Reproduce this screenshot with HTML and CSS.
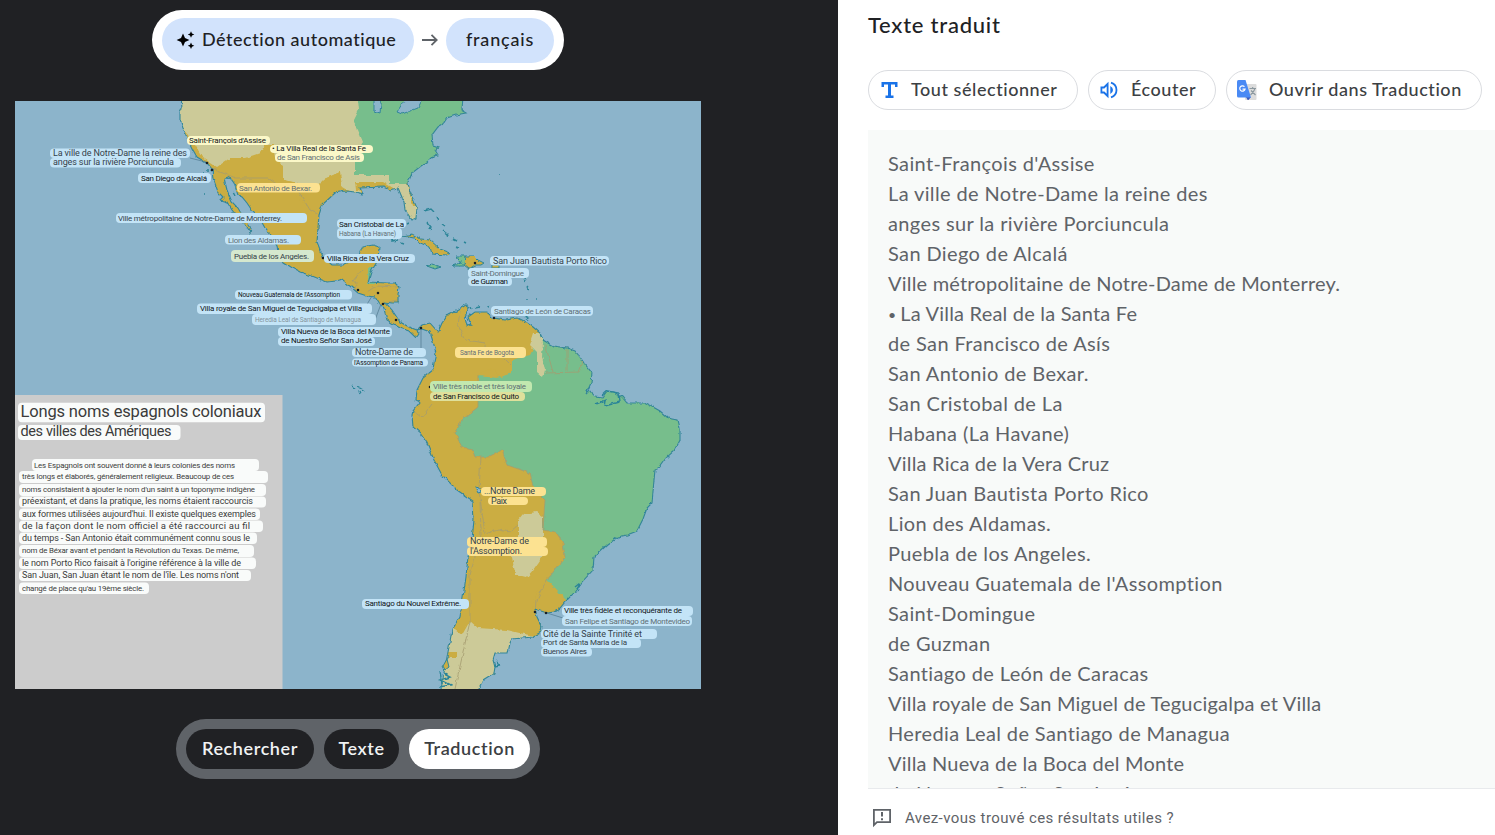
FILE: index.html
```html
<!DOCTYPE html>
<html lang="fr">
<head>
<meta charset="utf-8" />
<title>Texte traduit</title>
<link rel="stylesheet" href="styles.css">
</head>

<body>
<!-- Image et sélection des langues -->
<main class="viewer">
    <div class="lang_bar">
        <div class="lang lang_from">
            <svg width="20" height="20" viewBox="0 0 20 20"><path d="M7 3.500 9 8 13.400 10 9 12 7 16.500 5 12 0.600 10 5 8zM15 1.200 16 3.500 18.300 4.500 16 5.500 15 7.800 14 5.500 11.800 4.500 14 3.500zM15 12.500 16 14.700 18.300 15.700 16 16.700 15 19 14 16.700 11.800 15.700 14 14.700z"/></svg>
            <span class="txt_from">Détection automatique</span>
        </div>
        <svg class="arrow" width="16" height="14" viewBox="0 0 16 14"><path d="M0 7H14.500M9.500 1.800 14.700 7 9.500 12.200"/></svg>
        <div class="lang lang_to"><span>français</span></div>
    </div>

    <svg class="map" width="686" height="588" viewBox="15 101 686 588">
        <defs>
            <path id="land" d="M181 96 L182 108 180 112 180 120 183 128 188 140 193 150 197 157 207 163 212 169 213 178 218 192 223 197 220 200 227 202 232 210 240 220 246 226 250 233 251 228 242 215 238 208 232 202 227 190 224 178 227 177 231 179 234 183 238 195 242 197 247 203 253 212 260 219 265 228 272 238 277 245 278 253 283 262 291 267 300 272 312 276 327 282 335 281 342 279 351 287 358 293 367 296 375 297 380 305 384 309 387 320 400 328 409 331 415 337 418 333 417 330 422 329 430 332 434 345 436 353 434 362 433 370 423 378 417 390 416 400 420 402 413 411 412 415 413 427 420 433 427 443 434 460 442 475 457 490 473 501 474 520 472 540 468 557 466 577 463 597 460 617 452 630 449 647 445 667 440 695 L477 692 483 680 494 673 495 667 493 660 495 653 508 653 510 643 512 639 533 637 541 632 542 627 537 617 535 609 547 613 554 612 560 608 565 602 573 594 582 582 593 570 594 557 607 545 618 537 627 535 637 531 643 519 647 508 652 503 654 480 655 470 659 468 667 457 675 450 680 440 680 428 678 420 668 418 660 411 653 407 645 403 638 403 627 403 622 397 614 392 607 391 602 398 595 397 590 390 586 394 591 383 592 373 584 363 580 357 575 351 567 348 553 346 543 340 540 333 533 327 527 323 517 318 505 320 493 318 487 312 475 312 468 317 471 325 467 326 465 318 469 307 466 305 458 310 448 315 442 323 438 332 430 323 422 325 417 330 409 327 400 322 392 310 385 302 392 303 398 303 398 294 399 287 395 283 387 283 368 282 371 272 378 260 379 247 373 245 362 247 358 258 343 265 332 265 323 257 317 242 319 215 322 205 335 193 345 191 355 192 363 194 360 188 383 187 390 190 398 188 404 202 405 210 412 220 416 218 417 208 410 192 408 183 412 173 421 166 430 160 434 156 438 155 435 150 439 147 433 145 432 135 438 127 443 124 447 118 456 115 467 113 462 110 463 96z"/>
            <clipPath id="on_land"><use href="#land"/></clipPath>
            <!-- côtes irrégulières -->
            <filter id="rough" x="0" y="0" width="1" height="1">
                <feTurbulence type="fractalNoise" baseFrequency="0.18" numOctaves="2" seed="4"/>
                <feDisplacementMap in="SourceGraphic" scale="4" xChannelSelector="R" yChannelSelector="G"/>
            </filter>
        </defs>

        <rect class="sea" x="15" y="101" width="686" height="588"/>
        <g filter="url(#rough)">
            <rect x="5" y="91" width="706" height="608" fill="#8cb4cb"/>
            <use class="gold" href="#land"/>
            <g clip-path="url(#on_land)">
                <path class="tan" d="M170 90H480V230H400V196L382 183H355L340 172 322 180 318 190 308 185 283 180V165L275 158 273 145H265L260 153 245 158 230 158 217 167 203 158 195 145 183 128 170 120z"/>
                <path class="tan" d="M340 172H355L362 200H340z"/>
                <path class="gold" d="M283 180 308 185 318 190 322 180 340 172 342 187 352 193 320 215 300 200z"/>
                <path class="green" d="M357 90 359 110 353 122 358 130 363 142 355 155V175H389V184H408L480 190V90z"/>
                <path class="gold" d="M355 182H383L400 192 388 194 356 190zM407 183 414 188 419 206 413 206z"/>
                <path class="green" d="M368 267H374V284H368z"/>
                <path class="green" d="M543 330 530 355 512 360 512 373 497 378 490 373 478 375V407L462 420 455 433 462 447 473 450 475 457 488 457 502 450 507 465 530 473 533 487 545 500 543 530 556 532 563 543 565 557 547 580 557 590 565 601 590 600 700 500V330z"/>
                <path class="gold" d="M547 580 538 590 530 615 556 618 568 602 564 598 557 590zM478 376 498 378 495 369 480 372z"/>
                <path class="tan" d="M533 333 540 333 543 343 542 357 545 370 543 377 537 372 537 353 529 345z"/>
                <path class="tan" d="M523 514 537 512 543 516 543 545 542 557 538 563 533 570 527 577 515 574 512 557 518 545 518 520z"/>
                <path class="tan" d="M430 695 452 628 462 635 470 621 478 628 507 630 528 635 545 637 540 695z"/>
                <path class="gold" d="M447 652H457V657H447z"/>
                <path class="border" d="M212 169 236 178H268L285 190 295 186 310 210 319 215M355 293 356 282H352L362 270M367 292 376 286 398 287M385 303 397 300M460 311 458 325 465 340 485 343 488 350 498 352 511 365M478 375 478 407 462 420 455 433 462 447 473 450 475 457 488 457 502 450 507 465 530 473 533 487 545 500 543 530 556 532 563 543 565 557 547 580M545 344 553 372M567 349V371M583 362 579 372 545 373M413 410 422 417 432 404M481 457 479 490 485 534 498 530 510 532 518 525M480 500 481 535 470 575 470 621M470 621 455 689M547 580 537 600 536 612"/>
            </g>
            <use class="coast" href="#land"/>
            <path class="lake" d="M374 96V111L380 113 382 96zM407 96 397 112 402 114 418 108 424 96z"/>
            <path class="lake" d="M475 487 480 488 481 492 478 493z"/>
            <!-- îles -->
            <path class="isle gold" d="M403 236 412 234 421 239 430 240 440 249 451 253 447 255 432 254 430 247 418 242 414 238z"/>
            <path class="isle gold" d="M465 256 474 256 478 260 484 263 481 265 475 265 469 269 464 265zM492 265H499V268H492z"/>
            <path class="isle green" d="M456 256 465 256 464 266 452 266 461 263zM427 266 433 264 441 267 435 269z"/>
            <path class="isle gold" d="M447 659 449 667 445 670 443 666z"/>
            <path class="isle" d="M424 211 431 209 434 212M427 222 431 227 430 230M436 217 438 220M442 224 445 226M443 230 448 234 449 237M453 239 457 241M464 242 466 243M458 248 455 247M391 241 398 240M401 243 404 244M407 224 409 223M525 278 526 281M527 287 529 290M527 299 527 301M536 299V300M471 307 472 309M475 308 480 307M486 306 489 307M525 316 529 318 526 320M352 386 355 389M358 387 365 391M359 391 360 394M444 674 450 677 441 680 451 685 439 687M440 671 442 684M496 661 500 665 494 666M601 396 607 391 619 393 620 402 605 406 606 400 596 404M575 587 580 583 577 590M499 174H500M202 173H204M207 171H209M204 194H205M224 201H225M233 192 235 196"/>
        </g>

        <!-- villes -->
        <path class="leader" d="M190 158 206 162M372 296 366 306M381 304 375 320M421 329V348M547 613 563 618"/>
        <path class="town" d="M207 163h0M212 170h0M358 290h0M378 293h0M383 304h0M396 320h0M421 328h0M323 258h0M475 263h0M494 318h0M430 387h0M535 612h0M546 613h0"/>

        <!-- étiquettes traduites -->
        <g class="tags blue">
            <rect x="50" y="148.500" width="140" height="9.500" rx="4"/><text class="big" x="53" y="156.300" textLength="134">La ville de Notre-Dame la reine des</text>
            <rect x="50" y="158" width="131" height="9.500" rx="4"/><text class="big" x="53" y="165.300" textLength="121">anges sur la rivière Porciuncula</text>
            <rect x="138" y="173" width="73" height="10" rx="4"/><text class="dark" x="141" y="180.500" textLength="66">San Diego de Alcalá</text>
            <rect x="116" y="213" width="191" height="10" rx="4"/><text x="118" y="221" textLength="164">Ville métropolitaine de Notre-Dame de Monterrey.</text>
            <rect x="337" y="219" width="69" height="9" rx="4"/><text class="dark" x="339" y="226.500" textLength="65">San Cristobal de La</text>
            <rect x="337" y="228" width="65" height="11" rx="4"/><text class="tiny pale" x="339" y="235.500" textLength="57">Habana (La Havane)</text>
            <rect x="324" y="254" width="91" height="9" rx="4"/><text class="dark" x="327" y="261" textLength="82">Villa Rica de la Vera Cruz</text>
            <rect x="490" y="256" width="119" height="9.500" rx="4"/><text class="big" x="493" y="263.500" textLength="114">San Juan Bautista Porto Rico</text>
            <rect x="225" y="235" width="76" height="9.500" rx="4"/><text class="pale" x="228" y="242.700" textLength="61">Lion des Aldamas.</text>
            <rect x="235" y="290" width="117" height="9.500" rx="4"/><text class="tiny dark" x="238" y="296.500" textLength="102">Nouveau Guatemala de l'Assomption</text>
            <rect x="468" y="268" width="61" height="10" rx="4"/><text class="pale" x="471" y="275.500" textLength="53">Saint-Domingue</text>
            <rect x="468" y="277" width="44" height="9" rx="4"/><text class="dark" x="471" y="283.500" textLength="37">de Guzman</text>
            <rect x="491" y="306" width="102" height="10" rx="4"/><text class="pale" x="494" y="313.500" textLength="97">Santiago de León de Caracas</text>
            <rect x="197" y="303.500" width="175" height="10.500" rx="4"/><text class="dark" x="200" y="311.300" textLength="162">Villa royale de San Miguel de Tegucigalpa et Villa</text>
            <rect x="252" y="314" width="124" height="11" rx="4"/><text class="tiny faint" x="255" y="321.500" textLength="106">Heredia Leal de Santiago de Managua</text>
            <rect x="278" y="327" width="114" height="10" rx="4"/><text class="dark" x="281" y="334" textLength="109">Villa Nueva de la Boca del Monte</text>
            <rect x="278" y="337" width="97" height="9" rx="4"/><text class="dark" x="281" y="343.300" textLength="91">de Nuestro Señor San José</text>
            <rect x="352" y="348" width="74" height="9" rx="4"/><text class="big" x="355" y="355.300" textLength="58">Notre-Dame de</text>
            <rect x="352" y="358.500" width="76" height="8" rx="4"/><text class="tiny dark" x="354" y="364.500" textLength="69">l'Assomption de Panama</text>
            <rect x="362" y="599" width="107" height="10" rx="4"/><text class="dark" x="365" y="606.300" textLength="96">Santiago du Nouvel Extrême.</text>
            <rect x="562" y="606" width="131" height="10" rx="4"/><text class="dark" x="564" y="613.300" textLength="118">Ville très fidèle et reconquérante de</text>
            <rect x="562" y="616" width="130" height="10" rx="4"/><text class="pale" x="565" y="623.500" textLength="125">San Felipe et Santiago de Montevideo</text>
            <rect x="541" y="629" width="116" height="10" rx="4"/><text class="big" x="543" y="637" textLength="99">Cité de la Sainte Trinité et</text>
            <rect x="541" y="638.500" width="100" height="9.500" rx="4"/><text x="543" y="645.300" textLength="84">Port de Santa Maria de la</text>
            <rect x="541" y="647.500" width="51" height="9" rx="4"/><text x="543" y="654.300" textLength="44">Buenos Aires</text>
        </g>
        <g class="tags cream">
            <rect x="187" y="136" width="83" height="9" rx="4"/><text class="dark" x="189" y="143.300" textLength="77">Saint-François d'Assise</text>
            <rect x="270" y="145" width="103" height="8" rx="4"/><text class="dark" x="272" y="151.300" textLength="94">• La Villa Real de la Santa Fe</text>
            <rect x="275" y="153" width="89" height="9" rx="4"/><text class="pale" x="277" y="160.300" textLength="83">de San Francisco de Asís</text>
        </g>
        <g class="tags yellow">
            <rect x="237" y="183" width="83" height="9.500" rx="4"/><text class="pale" x="239" y="190.500" textLength="73">San Antonio de Bexar.</text>
            <rect x="455" y="347" width="71" height="11" rx="4"/><text class="tiny pale" x="460" y="354.500" textLength="54">Santa Fe de Bogota</text>
            <rect x="481" y="487" width="65" height="9" rx="4"/><text class="big" x="484" y="494.300" textLength="51">...Notre Dame</text>
            <rect x="488" y="497" width="40" height="8" rx="4"/><text class="big" x="491" y="504" textLength="16">Paix</text>
            <rect x="467" y="537" width="80" height="10" rx="4"/><text class="big" x="470" y="544.300" textLength="59">Notre-Dame de</text>
            <rect x="467" y="547" width="81" height="9" rx="4"/><text class="big" x="470" y="554" textLength="52">l'Assomption.</text>
        </g>
        <g class="tags lime">
            <rect class="soft" x="231" y="250" width="83" height="12" rx="4"/><text x="234" y="258.500" textLength="75">Puebla de los Angeles.</text>
            <rect x="430" y="381" width="102" height="11" rx="4"/><text class="pale" x="433" y="389.300" textLength="93">Ville très noble et très loyale</text>
            <rect class="olive" x="430" y="392" width="95" height="9" rx="4"/><text class="dark" x="433" y="399.300" textLength="86">de San Francisco de Quito</text>
        </g>

        <!-- légende -->
        <rect class="legend" x="15" y="395" width="267.500" height="294"/>
        <g class="tags paper">
            <rect x="18" y="402.700" width="247" height="19.500" rx="4"/><text class="h1" x="20.500" y="417.300" textLength="241">Longs noms espagnols coloniaux</text>
            <rect x="18" y="425" width="162.500" height="15" rx="4"/><text class="h2" x="20.500" y="436.300" textLength="151">des villes des Amériques</text>
            <rect x="32" y="459" width="227" height="12" rx="4"/><text class="small" x="34" y="468" textLength="201">Les Espagnols ont souvent donné à leurs colonies des noms</text>
            <rect x="19" y="471" width="249" height="12" rx="4"/><text class="small" x="22" y="479.300" textLength="212">très longs et élaborés, généralement religieux. Beaucoup de ces</text>
            <rect x="19" y="484" width="247" height="12" rx="4"/><text class="small" x="22" y="492.300" textLength="233">noms consistaient à ajouter le nom d'un saint à un toponyme indigène</text>
            <rect x="19" y="496.500" width="247" height="11" rx="4"/><text x="22" y="504" textLength="231">préexistant, et dans la pratique, les noms étaient raccourcis</text>
            <rect x="19" y="508.500" width="241" height="11.500" rx="4"/><text x="22" y="517" textLength="234">aux formes utilisées aujourd'hui. Il existe quelques exemples</text>
            <rect x="19" y="520.500" width="244" height="11.500" rx="4"/><text class="wide" x="22" y="529" textLength="228">de la façon dont le nom officiel a été raccourci au fil</text>
            <rect x="19" y="532.500" width="238" height="11.500" rx="4"/><text x="22" y="541" textLength="228">du temps - San Antonio était communément connu sous le</text>
            <rect x="19" y="545" width="235" height="12" rx="4"/><text class="small" x="22" y="553.300" textLength="217">nom de Béxar avant et pendant la Révolution du Texas. De même,</text>
            <rect x="19" y="557.500" width="237" height="11.500" rx="4"/><text x="22" y="566" textLength="219">le nom Porto Rico faisait à l'origine référence à la ville de</text>
            <rect x="19" y="570" width="232" height="11" rx="4"/><text x="22" y="578" textLength="217">San Juan, San Juan étant le nom de l'île. Les noms n'ont</text>
            <rect x="19" y="582.500" width="130" height="11.500" rx="4"/><text class="small" x="22" y="590.500" textLength="122">changé de place qu'au 19ème siècle.</text>
        </g>
    </svg>

    <nav class="modes">
        <span class="mode m_search">Rechercher</span>
        <span class="mode m_text">Texte</span>
        <span class="mode m_trad active">Traduction</span>
    </nav>
</main>

<!-- Panneau de traduction -->
<aside class="panel">
    <h1>Texte traduit</h1>
    <div class="actions">
        <span class="chip c_select">
            <svg width="20" height="20" viewBox="0 0 20 20"><path fill="#1a73e8" d="M2.500 2H18.500V7H16V4.500H12V15.500H14.500V18H6.500V15.500H9V4.500H5V7H2.500z"/></svg>
            <b>Tout sélectionner</b>
        </span>
        <span class="chip c_listen">
            <svg width="20" height="20" viewBox="0 0 20 20"><path fill="none" stroke="#1a73e8" stroke-width="1.800" d="M2.400 7.500H5L8.600 4V16L5 12.500H2.400zM12 2.600Q17.500 4.500 17.500 10T12 17.400"/><path fill="#1a73e8" d="M11.300 6Q14 7.300 14 10T11.300 14z"/></svg>
            <b>Écouter</b>
        </span>
        <span class="chip c_open">
            <svg width="20" height="20" viewBox="0 0 20 20"><rect x="8" y="4" width="11.500" height="16" rx="1" fill="#dcdcdc"/><path fill="none" stroke="#8b989e" stroke-width="1.100" d="M12.500 8.500H19M15.700 7V8.500M18 8.500Q17 12 13.500 15M14 10.500 18.500 15"/><path fill="#3a5bbf" d="M9 17H14L11 20.500z"/><path fill="#4a8af4" d="M1.500 0H8.500L14 17.500H1.500Q0 17.500 0 16V1.500Q0 0 1.500 0z"/><path fill="none" stroke="#fff" stroke-width="1.200" d="M7.500 6.700A2.700 2.700 0 1 0 8.100 9.100H5.500"/></svg>
            <b>Ouvrir dans Traduction</b>
        </span>
    </div>
    <div class="result">
        <p>Saint-François d'Assise</p>
        <p>La ville de Notre-Dame la reine des</p>
        <p>anges sur la rivière Porciuncula</p>
        <p>San Diego de Alcalá</p>
        <p class="tight">Ville métropolitaine de Notre-Dame de Monterrey.</p>
        <p class="tight"><span class="dot">•</span> La Villa Real de la Santa Fe</p>
        <p>de San Francisco de Asís</p>
        <p>San Antonio de Bexar.</p>
        <p>San Cristobal de La</p>
        <p>Habana (La Havane)</p>
        <p class="tight">Villa Rica de la Vera Cruz</p>
        <p>San Juan Bautista Porto Rico</p>
        <p>Lion des Aldamas.</p>
        <p>Puebla de los Angeles.</p>
        <p>Nouveau Guatemala de l'Assomption</p>
        <p>Saint-Domingue</p>
        <p>de Guzman</p>
        <p>Santiago de León de Caracas</p>
        <p class="tight">Villa royale de San Miguel de Tegucigalpa et Villa</p>
        <p>Heredia Leal de Santiago de Managua</p>
        <p class="tight">Villa Nueva de la Boca del Monte</p>
        <p>de Nuestro Señor San José</p>
    </div>
    <footer class="feedback">
        <svg width="20" height="20" viewBox="0 0 20 20"><path fill="none" stroke="#5f6368" stroke-width="1.800" d="M1.900 1.900H18.100V14.100H5L1.900 17.200z"/><path fill="#5f6368" d="M9 4H11V8.500H9zM9 10.300H11V12.300H9z"/></svg>
        <span>Avez-vous trouvé ces résultats utiles ?</span>
    </footer>
</aside>
</body>

</html>
```
FILE: styles.css
```css
body {
    margin: 0;
    display: flex;
    height: 835px;
    overflow: hidden;
    background: #fff;
    font-family: "Lato", "Open Sans", sans-serif;
}

/* Partie gauche */
.viewer {
    box-sizing: border-box;
    width: 838px;
    height: 835px;
    padding: 10px 0 0 15px;
    background: #202124;
    flex: none;
}

.lang_bar {
    box-sizing: border-box;
    display: flex;
    align-items: center;
    width: 412px;
    height: 60px;
    margin-left: 137px;
    padding: 0 10px;
    border-radius: 30px;
    background: #fff;
}

.lang {
    display: flex;
    align-items: center;
    box-sizing: border-box;
    height: 45px;
    border-radius: 23px;
    background: #d2e3fc;
    color: #202124;
    font-size: 18px;
    font-weight: 500;
    white-space: nowrap;
}

.lang span {
    padding-bottom: 2px;
}

.lang_from {
    width: 252px;
    padding-left: 14px;
    gap: 6px;
    letter-spacing: 0.52px;
}

.lang_to {
    width: 108px;
    justify-content: center;
    letter-spacing: 0.8px;
}

.arrow {
    margin: 0 8px;
    fill: none;
    stroke: #5f6368;
    stroke-width: 1.8;
}

.map {
    display: block;
    margin: 31px 0 30px;
}

.modes {
    box-sizing: border-box;
    display: flex;
    gap: 10px;
    width: 364px;
    height: 60px;
    margin-left: 161px;
    padding: 10px;
    border-radius: 30px;
    background: #5f6368;
}

.mode {
    height: 40px;
    line-height: 39px;
    border-radius: 20px;
    background: #202124;
    color: #f1f3f4;
    font-size: 18px;
    font-weight: 600;
    text-align: center;
    letter-spacing: 0.6px;
}

.m_search { width: 128px; }
.m_text {   width: 75px; }
.m_trad {   width: 121px; }

.mode.active {
    background: #fff;
    color: #3c4043;
}

/* Carte */
.sea {      fill: #8cb4cb; }
.gold {     fill: #cbad42; }
.tan {      fill: #ccca98; }
.green {    fill: #77be8c; }
.legend {   fill: #ccc; }

.coast {
    fill: none;
    stroke: #32869a;
    stroke-width: 1.1;
}

.border {
    fill: none;
    stroke: #a49c70;
    stroke-width: 0.8;
}

.lake {
    fill: #8cb4cb;
    stroke: #32869a;
}

.isle {
    stroke: #2c8598;
    stroke-width: 1;
}

.isle:not(.gold):not(.green) {
    fill: none;
    stroke-width: 1.4;
}

.leader {
    fill: none;
    stroke: #557f96;
    stroke-width: 0.8;
}

.town {
    stroke: #17202a;
    stroke-width: 2.6;
    stroke-linecap: round;
}

.tags {
    font-family: "Roboto", sans-serif;
    font-size: 8px;
}

.tags text {    fill: #35424a; }
.tags .dark {   fill: #101418; }
.tags .pale {   fill: #5e6e74; }
.tags .faint {  fill: #84949c; }
.tags .tiny {   font-size: 6.5px; }
.tags .big {    font-size: 9px; }

.blue rect {    fill: #c3e4f7; }
.cream rect {   fill: #fbf8c8; }
.yellow rect {  fill: #fce291; }
.lime rect {    fill: #c2e8af; }
.lime .soft {   fill: #d5e8ce; }
.lime .olive {  fill: #dfe09b; }
.paper rect {   fill: #f9fbfa; }

.paper text {   fill: #3b3b3b; font-size: 9px; }
.paper .wide {  font-size: 9.5px; }
.paper .small { font-size: 7.9px; }
.paper .h1 {    font-size: 16.5px; }
.paper .h2 {    font-size: 14.5px; }

/* Panneau de droite */
.panel {
    display: flex;
    flex-direction: column;
    width: 627px;
    padding-left: 30px;
    flex: none;
}

.panel h1 {
    margin: 10px 0 30px;
    height: 30px;
    line-height: 30px;
    color: #202124;
    font-size: 22px;
    font-weight: 500;
    letter-spacing: 0.75px;
}

.actions {
    display: flex;
    gap: 10px;
    margin-bottom: 20px;
}

.chip {
    box-sizing: border-box;
    display: flex;
    align-items: center;
    height: 40px;
    border: 1px solid #dadce0;
    border-radius: 20px;
    padding-left: 10px;
    gap: 12px;
    color: #3c4043;
    font-size: 18px;
    white-space: nowrap;
    letter-spacing: 0.55px;
}

.chip b {
    font-weight: 500;
    padding-bottom: 2px;
}

.c_select { width: 210px; }
.c_listen { width: 128px; }
.c_open {   width: 256px; }

.result {
    box-sizing: border-box;
    flex: none;
    height: 659px;
    padding: 18px 20px 0;
    border-bottom: 1px solid #e8eaed;
    background: #f8faf9;
    color: #5f6368;
    overflow: hidden;
}

.result p {
    margin: 0;
    font-size: 20px;
    line-height: 30px;
    white-space: nowrap;
    letter-spacing: 0.38px;
}

.result .tight {
    letter-spacing: 0.2px;
}

.dot {
    display: inline-block;
    width: 7px;
    font-size: 14px;
    vertical-align: 1px;
    line-height: 1;
}

.feedback {
    display: flex;
    align-items: center;
    flex: none;
    height: 46px;
    padding: 12px 0 0 4px;
    box-sizing: border-box;
    gap: 13px;
    color: #5f6368;
    font-family: "Roboto", sans-serif;
    font-size: 15px;
    letter-spacing: 0.4px;
}
```
